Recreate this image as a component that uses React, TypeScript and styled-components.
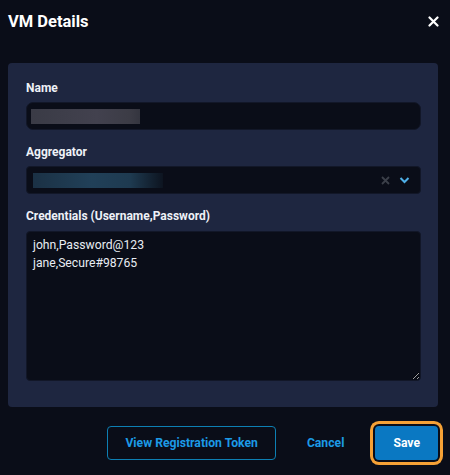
import React from 'react';
import styled, { createGlobalStyle } from 'styled-components';

const GlobalStyle = createGlobalStyle`
  html, body {
    margin: 0;
    padding: 0;
    background: #0a0d18;
  }
  body {
    font-family: Roboto, "Noto Sans", "Liberation Sans", sans-serif;
    color: #ffffff;
  }
  * {
    box-sizing: border-box;
  }
`;

const Dialog = styled.div`
  width: 450px;
  height: 475px;
  display: flex;
  flex-direction: column;
  padding: 8px 12px 0 8px;
  background: #0a0d18;
`;

const Header = styled.div`
  display: flex;
  justify-content: space-between;
  align-items: flex-start;
  height: 55px;
  padding-top: 3px;
`;

const Title = styled.h2`
  margin: 0;
  font-size: 16.5px;
  line-height: 22px;
  font-weight: 700;
  color: #ffffff;
`;

const CloseButton = styled.button`
  border: 0;
  background: none;
  padding: 0;
  margin: 3px -2px 0 0;
  width: 14px;
  height: 14px;
  display: flex;
  align-items: center;
  justify-content: center;
  cursor: pointer;
`;

const Panel = styled.div`
  background: #1e2640;
  border-radius: 4px;
  padding: 17px 17px 26px 18px;
  display: flex;
  flex-direction: column;
`;

const Field = styled.div`
  display: flex;
  flex-direction: column;
  margin-bottom: 14px;
  &:last-child {
    margin-bottom: 0;
  }
`;

const Label = styled.label`
  font-size: 12px;
  line-height: 16px;
  font-weight: 700;
  color: #eef1f7;
  margin-bottom: 6px;
`;

const InputBox = styled.div<{ $radius?: number }>`
  height: 28px;
  background: #0a0d18;
  border: 1px solid #121728;
  border-radius: ${(p) => p.$radius ?? 7}px;
  display: flex;
  align-items: center;
  padding: 0 10px 0 4px;
`;

const Redacted = styled.span<{ $width: number; $tone: 'gray' | 'blue'; $offset?: number }>`
  display: block;
  width: ${(p) => p.$width}px;
  height: 15px;
  margin-left: ${(p) => p.$offset ?? 0}px;
  filter: blur(0.6px);
  background: ${(p) =>
    p.$tone === 'gray'
      ? 'linear-gradient(90deg, #3a3b46 0%, #42414e 60%, #3c3c46 90%, #34353f 100%)'
      : 'linear-gradient(90deg, #1b3145 0%, #214058 45%, #1e3a50 75%, #0d1420 100%)'};
`;

const SelectIcons = styled.div`
  margin-left: auto;
  display: flex;
  align-items: center;
  gap: 9px;
`;

const TextArea = styled.textarea`
  height: 150px;
  width: 100%;
  margin-top: 1px;
  resize: vertical;
  background: #0a0d18;
  border: 1px solid #121728;
  border-radius: 4px;
  color: #e8ecf3;
  font-family: Roboto, "Noto Sans", "Liberation Sans", sans-serif;
  font-size: 12.2px;
  line-height: 18px;
  padding: 4px 6px;
  outline: none;
`;

const Footer = styled.div`
  display: flex;
  justify-content: flex-end;
  align-items: center;
  gap: 14px;
  margin-top: 19px;
`;

const Button = styled.button<{ $variant: 'outline' | 'text' | 'primary' }>`
  height: 34px;
  padding: 0 ${(p) => (p.$variant === 'text' ? 16 : 17)}px;
  font-family: Roboto, "Noto Sans", "Liberation Sans", sans-serif;
  font-size: 12.2px;
  font-weight: 700;
  border-radius: 4px;
  cursor: pointer;
  border: 1px solid
    ${(p) => (p.$variant === 'outline' ? '#0d7fb3' : 'transparent')};
  background: ${(p) => (p.$variant === 'primary' ? '#0a78c2' : 'transparent')};
  color: ${(p) => (p.$variant === 'primary' ? '#ffffff' : '#1c9ae6')};
  box-shadow: ${(p) =>
    p.$variant === 'primary' ? '0 0 0 2px #0a0d18, 0 0 0 5px #f5a136' : 'none'};
  & + & {
    margin-left: ${(p) => (p.$variant === 'text' ? -1 : 0)}px;
  }
`;

const App = () => {
  return (
    <>
      <GlobalStyle />
      <Dialog>
        <Header>
          <Title>VM Details</Title>
          <CloseButton aria-label="Close">
            <svg width="11" height="11" viewBox="0 0 11 11">
              <path d="M1.5 1.5 L9.5 9.5 M9.5 1.5 L1.5 9.5" stroke="#ffffff" strokeWidth="2.2" strokeLinecap="round" />
            </svg>
          </CloseButton>
        </Header>
        <Panel>
          <Field>
            <Label>Name</Label>
            <InputBox>
              <Redacted $width={109} $tone="gray" />
            </InputBox>
          </Field>
          <Field>
            <Label>Aggregator</Label>
            <InputBox $radius={4}>
              <Redacted $width={130} $tone="blue" $offset={2} />
              <SelectIcons>
                <svg width="9" height="9" viewBox="0 0 9 9">
                  <path d="M1 1 L8 8 M8 1 L1 8" stroke="#3b3f49" strokeWidth="1.8" />
                </svg>
                <svg width="11" height="8" viewBox="0 0 11 8">
                  <path d="M1.5 2 L5.5 6 L9.5 2" stroke="#4fb0e8" strokeWidth="2" fill="none" />
                </svg>
              </SelectIcons>
            </InputBox>
          </Field>
          <Field>
            <Label>Credentials (Username,Password)</Label>
            <TextArea
              defaultValue={'john,Password@123\njane,Secure#98765'}
              spellCheck={false}
            />
          </Field>
        </Panel>
        <Footer>
          <Button $variant="outline">View Registration Token</Button>
          <Button $variant="text">Cancel</Button>
          <Button $variant="primary">Save</Button>
        </Footer>
      </Dialog>
    </>
  );
};

export default App;
